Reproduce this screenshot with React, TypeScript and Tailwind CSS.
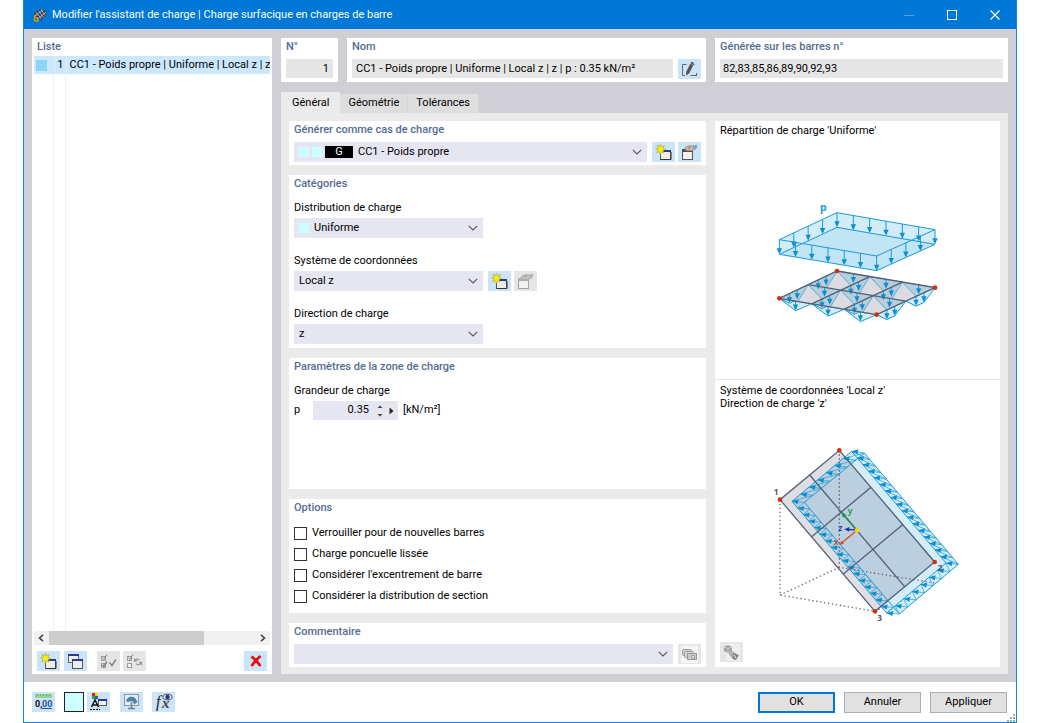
import React, { useState } from "react";

type Pt = [number, number];

const lerp = (a: Pt, b: Pt, t: number): Pt => [a[0] + (b[0] - a[0]) * t, a[1] + (b[1] - a[1]) * t];
const points = (...p: Pt[]) => p.map((q) => q.join(",")).join(" ");

/* ---------- Icons ---------- */

function Star() {
  return (
    <path
      d="M4.5 0 5.6 2.8 8.4 1.6 7 4.3 10 5.5 7 6.6 8 9.2 5.4 7.8 4.3 10.500 3.3 7.6 0.600 8.8 2.1 6 -0.500 4.7 2.3 3.8 1 1.2 3.6 2.6Z"
      fill="#f6ee12"
      stroke="#a2973a"
      strokeWidth="0.5"
    />
  );
}

function NewIcon() {
  return (
    <svg viewBox="-1 0 17 17" className="size-[17px]" aria-hidden="true">
      <rect x="4.500" y="6.500" width="10" height="9" fill="#ededea" stroke="#555" />
      <rect x="4" y="6" width="11" height="2" fill="#2a3a8c" />
      <path d="M5 15.500H15V8" fill="none" stroke="#333" />
      <Star />
    </svg>
  );
}

function EditIcon({ gray = false }: { gray?: boolean }) {
  return (
    <svg viewBox="0 0 17 17" className="size-[17px]" aria-hidden="true">
      <rect x="1.500" y="5.500" width="10" height="10" fill="#f1f1ef" stroke={gray ? "#a0a0a0" : "#555"} />
      <rect x="1" y="5" width="11" height="3" fill={gray ? "#b0b0b0" : "#4a5266"} />
      <path d="M4 4C6 2 8 1.600 11 1.800L13 4 11.500 6.500C10.500 7.500 9 6 8 6.800 6.500 7.500 4.500 6.500 4 4Z" fill={gray ? "#c6c6c6" : "#dcb797"} stroke={gray ? "#999" : "#94745c"} strokeWidth="0.700" />
      <path d="M6.500 5 9 4.500M7 3.500 10 3.500" stroke={gray ? "#999" : "#94745c"} strokeWidth="0.600" />
      <path d="M11 1.500 16.500 0.800 16 3.500 14 6.500 12.600 5Z" fill={gray ? "#b5b5b5" : "#7ba3d0"} />
    </svg>
  );
}

function CopyWindowsIcon() {
  return (
    <svg viewBox="0 0 17 17" className="size-[17px]" aria-hidden="true">
      <rect x="1.500" y="1.500" width="10" height="8" fill="#eee" stroke="#666" />
      <rect x="1" y="1" width="11" height="2" fill="#2a3a8c" />
      <rect x="5.500" y="6.500" width="10" height="9" fill="#ededea" stroke="#555" />
      <rect x="5" y="6" width="11" height="2" fill="#2a3a8c" />
    </svg>
  );
}

function CheckAllIcon({ swap = false }: { swap?: boolean }) {
  return (
    <svg viewBox="0 0 17 17" className="size-[17px]" fill="none" stroke="#9a9a9a" aria-hidden="true">
      <rect x="1.500" y="3.500" width="4" height="4" fill="#f2f2f2" />
      <rect x="1.500" y="10.500" width="4" height="4" fill="#f2f2f2" />
      <path d="M2.500 4.500 3.800 6.500 7 1.500" stroke="#808080" />
      {swap ? (
        <path d="M8.500 8C9.500 5.800 12 5.800 13.500 7M15.500 9.500C14 12 11.500 12 10 10.800M8.500 5.500V8H11M15.500 12V9.500H13" strokeWidth="1.300" />
      ) : (
        <path d="M2.500 11.500 3.800 13.500 7 8.500M9.500 9.500 12 12.500 16 6.500" stroke="#808080" strokeWidth="1.400" />
      )}
    </svg>
  );
}

function DeleteIcon() {
  return (
    <svg viewBox="0 0 14 14" className="size-3.5" aria-hidden="true">
      <path d="M2.500 2.500C5 4.500 9 8.500 11.500 12M11.500 2C8 5 5 8.500 2.500 12" stroke="#f00a0a" strokeWidth="2.800" fill="none" />
    </svg>
  );
}

function PencilIcon() {
  return (
    <svg viewBox="0 0 17 17" className="size-[17px]" fill="none" stroke="#666" aria-hidden="true">
      <path d="M5.500 3.500H1.500V14.500H4M12 3.500H13.500M9.500 14.500H16M15.500 12V14.500" />
      <path d="M9.500 3 12 4 8 12 5.500 14 5.500 11Z" fill="#555" stroke="#444" strokeWidth="0.600" />
      <path d="M10 1.500 12.500 2.500" stroke="#444" strokeWidth="1.500" />
    </svg>
  );
}

function StackIcon() {
  return (
    <svg viewBox="0 0 17 17" className="size-[17px]" stroke="#999" aria-hidden="true">
      <rect width="17" height="17" fill="#f5f5f5" stroke="none" />
      <rect x="1.500" y="3.500" width="9" height="6" rx="1" fill="#d6d6d6" />
      <rect x="3.500" y="5.500" width="9" height="6" rx="1" fill="#d6d6d6" />
      <rect x="6.500" y="7.500" width="9" height="6" fill="#c9c9c9" />
      <path d="M11 9.500H13.500V12H11Z" fill="#fff" />
    </svg>
  );
}

function TransferIcon() {
  return (
    <svg viewBox="0 0 17 17" className="size-[17px]" aria-hidden="true">
      <rect x="3" width="14" height="17" fill="#efefef" />
      <path d="M1 3 5 1 9 3V7L5 9 1 7Z" fill="#a3a3a3" />
      <path d="M1 3 5 4.500 9 3M5 4.500V9" stroke="#ccc" fill="none" />
      <path d="M5 9 9 7 14 10V13L10 15 7 12Z" fill="#b4b4b4" />
      <path d="M10 9 16 11 13 16 9.500 15Z" fill="#858585" />
      <path d="M11 11 13 14" stroke="#eee" />
    </svg>
  );
}

function UnitsIcon() {
  return (
    <svg viewBox="0 0 19 18" className="h-[18px] w-[19px]" aria-hidden="true">
      <rect x="1" y="1" width="17" height="4" fill="#8fd694" />
      <path d="M3.500 1V3M6.500 1V3M9.500 1V3M12.500 1V3M15.500 1V3" stroke="#579c5c" strokeWidth="0.700" />
      <text x="1" y="14" fontSize="9" fontWeight="700" fill="#111" fontFamily="Roboto, sans-serif">0,</text>
      <text x="8" y="14" fontSize="9" fontWeight="700" fill="#2454a4" fontFamily="Roboto, sans-serif">00</text>
      <path d="M8 15.500H18" stroke="#2454a4" />
    </svg>
  );
}

function DisplayIcon() {
  return (
    <svg viewBox="0 0 19 18" className="h-[18px] w-[19px]" aria-hidden="true">
      <rect x="3" y="0" width="3" height="3" fill="#e02020" />
      <rect x="6" y="0" width="3" height="3" fill="#e6d81e" />
      <rect x="3" y="3" width="3" height="3" fill="#22ad35" />
      <rect x="6" y="3" width="3" height="3" fill="#2c55d2" />
      <path d="M2.500 14 6 7 9.500 14M4 12H8" stroke="#111" strokeWidth="1.500" fill="none" />
      <path d="M1 16.500H11" stroke="#111" strokeDasharray="2 1" />
      <rect x="9.500" y="6.500" width="8" height="6" fill="#f3f3f3" stroke="#555" />
      <rect x="9" y="6" width="9" height="2" fill="#2a3a8c" />
    </svg>
  );
}

function ScreenIcon() {
  return (
    <svg viewBox="0 0 19 18" className="h-[18px] w-[19px]" aria-hidden="true">
      <rect x="2.500" y="1.500" width="14" height="11" fill="#e2edf5" stroke="#8a98a4" />
      <path d="M4 8C5 4 10 2.500 13 5L15.500 9 12 11.500 11 8.500C9 8 7 8 6 9Z" fill="#4a7fae" />
      <path d="M9.500 9V15M6 15.500H13" stroke="#75818b" strokeWidth="1.500" />
    </svg>
  );
}

function FormulaIcon() {
  return (
    <svg viewBox="0 0 19 18" className="h-[18px] w-[19px]" aria-hidden="true">
      <text x="2" y="14" fontSize="16" fontStyle="italic" fontFamily="Liberation Serif, serif" fill="#222">f</text>
      <text x="8" y="15" fontSize="15" fontStyle="italic" fontWeight="700" fontFamily="Liberation Serif, serif" fill="#444">x</text>
      <ellipse cx="13.500" cy="4" rx="4.500" ry="2.800" fill="#e8ecfa" stroke="#27356e" strokeWidth="0.900" />
      <circle cx="13.500" cy="4" r="2.200" fill="#27356e" />
    </svg>
  );
}

function AppIcon() {
  return (
    <svg viewBox="0 0 16 16" className="size-4" aria-hidden="true">
      <path d="M2 6 8 2 14.500 4 14.500 8 9 13.500 5 12Z" fill="#2f3d57" />
      <path d="M4 5 9.500 12M6.500 3.500 11.500 10.500M9 2.500 13.500 8.500M3 9 11 2.800M6 12 14 5" stroke="#b6c4d6" strokeWidth="0.900" />
      <text x="1" y="14.500" fontSize="10" fontWeight="700" fill="#f3c22b" stroke="#5a4a14" strokeWidth="0.300" fontFamily="Roboto, sans-serif">6</text>
    </svg>
  );
}

function Chevron() {
  return (
    <svg viewBox="0 0 10 6" className="pointer-events-none h-1.5 w-2.5 shrink-0" fill="none" aria-hidden="true">
      <path d="M0.800 0.800 5 5 9.200 0.800" stroke="#555" strokeWidth="1.100" />
    </svg>
  );
}

/* ---------- Building blocks ---------- */

function Panel({ title, className = "", children }: { title: string; className?: string; children: React.ReactNode }) {
  return (
    <section className={`flex flex-col bg-white px-[5px] pt-px pb-[3px] ${className}`}>
      <h2 className="leading-4 font-medium text-[#566b93]">{title}</h2>
      {children}
    </section>
  );
}

function IconButton({ label, disabled = false, children }: { label: string; disabled?: boolean; children: React.ReactNode }) {
  return (
    <button
      type="button"
      aria-label={label}
      disabled={disabled}
      className="flex h-5 w-[23px] shrink-0 items-center justify-center bg-[#cce4f7] disabled:bg-[#e6e6e6]"
    >
      {children}
    </button>
  );
}

function Combo({ id, label, value, lead, className = "" }: { id: string; label?: string; value: string; lead?: React.ReactNode; className?: string }) {
  return (
    <div className={`flex h-5 items-center gap-[5px] bg-[#e6e6f2] px-[5px] ${className}`}>
      {lead}
      <select id={id} aria-label={label} defaultValue={value} className="-mr-3.5 h-5 min-w-0 flex-1 appearance-none bg-transparent outline-none">
        <option>{value}</option>
      </select>
      <Chevron />
    </div>
  );
}

const Swatch = () => <span className="block size-2.5 shrink-0 bg-[#ccffff]" />;

/* ---------- Diagrams ---------- */

const BLUE = "#1a9ad6";

function DownArrow({ at, len }: { at: Pt; len: number }) {
  const [x, y] = at;
  return (
    <g>
      <path d={`M${x} ${y}V${y + len - 8}`} stroke={BLUE} strokeWidth="3" />
      <path d={`M${x - 8} ${y + len - 18}H${x + 8}L${x} ${y + len}Z`} fill="#0c8fd0" />
    </g>
  );
}

function UniformLoadDiagram() {
  const top: Pt[] = [[216, 71], [510, 122], [335, 201], [43, 152]];
  const low = top.map(([x, y]): Pt => [x, y + 44]);
  const base: Pt[] = [[216, 246], [510, 296], [335, 377], [43, 328]];
  const node = (u: number, v: number): Pt => lerp(lerp(base[0], base[1], u / 3), lerp(base[3], base[2], u / 3), v / 2);
  const arrows: Pt[] = [];
  for (let i = 0; i <= 6; i++) arrows.push(lerp(top[0], top[1], i / 6), lerp(top[3], top[2], i / 6));
  for (let i = 1; i < 4; i++) arrows.push(lerp(top[0], top[3], i / 4), lerp(top[1], top[2], i / 4));
  const drop = (p: Pt, d: number): Pt => [p[0], p[1] + d];
  const hangs: Pt[][] = [];
  const loads: Pt[] = [];
  for (let v = 0; v <= 2; v++)
    for (let u = 0; u < 3; u++) {
      const a = node(u, v);
      const b = node(u + 1, v);
      const m = lerp(a, b, 0.5);
      hangs.push([a, b, drop(m, 29)]);
      loads.push(m);
    }
  for (let u = 0; u <= 3; u++)
    for (let v = 0; v < 2; v++) {
      const a = node(u, v);
      const b = node(u, v + 1);
      const p = lerp(a, b, 0.38);
      const q = lerp(a, b, 0.65);
      hangs.push([a, b, drop(q, 29), drop(p, 29)]);
      loads.push(p, q);
    }
  const free: Pt[][] = [];
  for (let v = 0; v < 2; v++)
    for (let u = 0; u < 3; u++)
      free.push([
        lerp(node(u, v + 1), node(u + 1, v + 1), 0.57),
        node(u, v),
        lerp(node(u + 1, v + 1), node(u + 1, v), 0.35),
        node(u + 1, v + 1),
      ]);
  return (
    <svg viewBox="0 0 555 420" className="h-[140px] w-[185px]" role="img" aria-label="Répartition de charge uniforme">
      <text x="165" y="66" fontSize="31" fontWeight="700" fill={BLUE} fontFamily="Open Sans, sans-serif">p</text>
      <polygon points={points(top[0], top[1], low[1], low[2], low[3], top[3])} fill="#d3edf8" />
      <polygon points={points(...low)} fill="#c2e5f5" />
      <g fill="none" stroke={BLUE} strokeWidth="3">
        <polygon points={points(...top)} />
        <polygon points={points(...low)} />
      </g>
      {arrows.map((a, i) => <DownArrow key={i} at={a} len={44} />)}
      {hangs.map((h, i) => (
        <polygon key={i} points={points(...h)} fill="#d3edf8" stroke={BLUE} strokeWidth="3" />
      ))}
      <polygon points={points(...base)} fill="#b9cedb" />
      {free.map((f, i) => (
        <g key={i}>
          <polygon points={points(...f)} fill="#dddbe2" />
          <polyline points={points(f[0], f[1], f[2])} fill="none" stroke={BLUE} strokeWidth="2" />
        </g>
      ))}
      {loads.map((a, i) => <DownArrow key={i} at={a} len={28} />)}
      <g fill="none" stroke="#52617a" strokeWidth="4">
        <polygon points={points(...base)} />
        <polyline points={points(node(0, 1), node(3, 1))} />
        <polyline points={points(node(1, 0), node(1, 2))} />
        <polyline points={points(node(2, 0), node(2, 2))} />
      </g>
      {base.map(([x, y], i) => <circle key={i} cx={x} cy={y} r="7" fill="#cc3311" />)}
    </svg>
  );
}

function LocalAxisDiagram() {
  const plate: Pt[] = [[238, 34], [524, 369], [345, 517], [60, 182]];
  const near: Pt[] = [[275, 37], [558, 372], [380, 522], [96, 187]];
  const far: Pt[] = [[313, 42], [595, 376], [418, 525], [133, 190]];
  const arrows: [Pt, Pt, Pt][] = [];
  const edge = (i: number, j: number, n: number) => {
    for (let k = 0; k < n; k++)
      arrows.push([lerp(far[i], far[j], k / n), lerp(near[i], near[j], k / n), lerp(far[i], far[j], (k + 1) / n)]);
  };
  edge(0, 1, 17);
  edge(1, 2, 7);
  edge(2, 3, 17);
  edge(3, 0, 7);
  return (
    <svg viewBox="0 0 660 570" className="h-[190px] w-[220px]" role="img" aria-label="Système de coordonnées local z">
      <path d="M60 182V468L345 517M60 468 238 385M524 432V369M345 517 524 432" fill="none" stroke="#666676" strokeWidth="4" strokeDasharray="4 8" />
      <polygon points={points(near[0], far[0], far[1], far[2], near[2], near[3])} fill="#d5edf9" />
      <polygon points={points(...plate)} fill="#5c5c74" fillOpacity="0.2" />
      <path d="M238 34V385L524 432" fill="none" stroke="#666676" strokeWidth="4" strokeDasharray="4 8" />
      <g fill="none" stroke={BLUE} strokeWidth="2">
        <polygon points={points(...near)} strokeWidth="3" />
        <polygon points={points(...far)} strokeWidth="3" />
        {arrows.map((a, i) => <polyline key={i} points={points(...a)} />)}
      </g>
      {arrows.map(([, [x, y]], i) => (
        <polygon key={i} points={points([x, y], [x + 20, y - 6], [x + 17, y + 9])} fill="#0c8fd0" />
      ))}
      <g fill="none" stroke="#52617a" strokeWidth="4">
        <polygon points={points(...plate)} />
        <path d="M149 108 434 443M333 145 155 293M428 257 250 405" />
      </g>
      <path d="M291 274 248 223" stroke="#169447" strokeWidth="4" />
      <path d="M243 218 259 228 249 236Z" fill="#169447" />
      <path d="M291 274 242 314" stroke="#dc4c22" strokeWidth="4" />
      <path d="M238 318 244 305 252 314Z" fill="#dc4c22" />
      <path d="M291 273 262 271" stroke="#1a33b8" strokeWidth="4" />
      <path d="M253 271 268 264V278Z" fill="#1a33b8" />
      <circle cx="291" cy="274" r="7" fill="#f5d90a" />
      {plate.map(([x, y], i) => <circle key={i} cx={x} cy={y} r="7" fill="#cc3311" />)}
      <g fontFamily="Open Sans, sans-serif" fontSize="26" fontWeight="600">
        <text x="263" y="224" fill="#169447">y</text>
        <text x="235" y="277" fill="#1a33b8">z</text>
        <text x="221" y="318" fill="#c04a2c">x</text>
        <g fill="#555566" fontWeight="700" fontSize="25">
          <text x="41" y="167">1</text>
          <text x="533" y="396">2</text>
          <text x="352" y="547">3</text>
        </g>
      </g>
    </svg>
  );
}

/* ---------- Page ---------- */

const TABS = ["Général", "Géométrie", "Tolérances"];
const OPTIONS = [
  "Verrouiller pour de nouvelles barres",
  "Charge poncuelle lissée",
  "Considérer l'excentrement de barre",
  "Considérer la distribution de section",
];

export default function App() {
  const [tab, setTab] = useState(0);
  return (
    <div className="flex min-h-screen bg-white px-[23px] font-['Roboto','Open_Sans',sans-serif] text-[11px] text-black">
      <div className="flex min-w-0 flex-1 flex-col border border-t-0 border-[#1a82d8]">
        <header className="flex h-[29px] items-center bg-[#0078d7] pl-2 text-white">
          <AppIcon />
          <h1 className="ml-1 flex-1 truncate pt-px leading-4">Modifier l'assistant de charge | Charge surfacique en charges de barre</h1>
          <button type="button" aria-label="Réduire" className="flex h-full w-[43px] items-center justify-center opacity-30">
            <svg viewBox="0 0 10 10" className="size-2.5" aria-hidden="true"><path d="M0 5.500H10" stroke="#fff" /></svg>
          </button>
          <button type="button" aria-label="Agrandir" className="flex h-full w-[43px] items-center justify-center">
            <svg viewBox="0 0 10 10" className="size-2.5" aria-hidden="true"><rect x="0.500" y="0.500" width="9" height="9" fill="none" stroke="#fff" /></svg>
          </button>
          <button type="button" aria-label="Fermer" className="flex h-full w-[43px] items-center justify-center">
            <svg viewBox="0 0 10 10" className="size-2.5" aria-hidden="true"><path d="M0.500 0.500 9.500 9.500M9.500 0.500 0.500 9.500" stroke="#fff" strokeWidth="1.200" /></svg>
          </button>
        </header>

        <main className="flex flex-1 gap-[9px] border-t border-[#dcd3d3] bg-[#d0cfd5] p-2">
          <section className="flex w-60 shrink-0 flex-col bg-white px-0.5 pt-px pb-[3px]">
            <h2 className="px-[3px] leading-4 font-medium text-[#566b93]">Liste</h2>
            <table className="mt-px w-full table-fixed border-collapse">
              <tbody>
                <tr className="h-[18px] bg-[#cce8ff]">
                  <td className="w-5 border-r border-[#e4eef5] p-0 pl-0.5"><span className="block size-[11px] bg-[#8bd6f5]" /></td>
                  <td className="w-3 border-r border-[#e4eef5] p-0 pr-0.5 text-right leading-[18px]">1</td>
                  <td className="overflow-hidden p-0 pl-[3px] leading-[18px] whitespace-nowrap">CC1 - Poids propre | Uniforme | Local z | z</td>
                </tr>
              </tbody>
            </table>
            <div className="grid flex-1 grid-cols-[20px_12px_1fr]">
              <span className="border-r border-[#f0f0f0]" />
              <span className="border-r border-[#f0f0f0]" />
            </div>
            <div className="flex h-3.5 items-center bg-[#f0f0f0] px-[3px]">
              <svg viewBox="0 0 8 8" className="size-2" fill="none" aria-hidden="true"><path d="M6 0.800 2.500 4 6 7.200" stroke="#444" strokeWidth="1.600" /></svg>
              <div className="mx-1 flex h-full flex-1"><div className="w-3/4 bg-[#cdcdcd]" /></div>
              <svg viewBox="0 0 8 8" className="size-2" fill="none" aria-hidden="true"><path d="M2 0.800 5.500 4 2 7.200" stroke="#444" strokeWidth="1.600" /></svg>
            </div>
            <div className="mt-1.5 flex gap-1 px-[3px]">
              <IconButton label="Nouveau"><NewIcon /></IconButton>
              <IconButton label="Copier"><CopyWindowsIcon /></IconButton>
              <div className="ml-1.5 flex gap-[3px]">
                <IconButton label="Tout sélectionner" disabled><CheckAllIcon /></IconButton>
                <IconButton label="Inverser la sélection" disabled><CheckAllIcon swap /></IconButton>
              </div>
              <div className="ml-auto"><IconButton label="Supprimer"><DeleteIcon /></IconButton></div>
            </div>
          </section>

          <div className="flex min-w-0 flex-1 flex-col">
            <div className="flex gap-[9px]">
              <Panel title="N°" className="w-[57px] shrink-0">
                <input aria-label="N°" readOnly value="1" className="mt-1 h-[19px] w-full bg-[#e6e6e6] px-1 text-right" />
              </Panel>
              <Panel title="Nom" className="min-w-0 flex-1">
                <div className="mt-1 flex gap-[5px]">
                  <input aria-label="Nom" readOnly value="CC1 - Poids propre | Uniforme | Local z | z | p : 0.35 kN/m²" className="h-[19px] min-w-0 flex-1 bg-[#e6e6e6] px-1" />
                  <IconButton label="Modifier le nom"><PencilIcon /></IconButton>
                </div>
              </Panel>
              <Panel title="Générée sur les barres n°" className="w-[293px] shrink-0">
                <input aria-label="Générée sur les barres n°" readOnly value="82,83,85,86,89,90,92,93" className="mt-1 h-[19px] w-full bg-[#e6e6e6] px-[3px]" />
              </Panel>
            </div>

            <div role="tablist" className="mt-2.5 flex h-[21px] items-end">
              {TABS.map((t, i) => (
                <button
                  key={t}
                  type="button"
                  role="tab"
                  aria-selected={tab === i}
                  onClick={() => setTab(i)}
                  className={tab === i ? "h-[21px] bg-[#ebebeb] px-[11px] pt-0.5" : "h-[19px] border-r border-[#d4d4d6] bg-[#dedede] px-2"}
                >
                  {t}
                </button>
              ))}
            </div>

            <div className="flex flex-1 gap-[9px] bg-[#ebebeb] px-2 pt-2 pb-[7px]">
              <div className="flex min-w-0 flex-1 flex-col gap-2.5">
                <Panel title="Générer comme cas de charge">
                  <div className="mt-1 flex gap-[3px]">
                    <Combo
                      id="case"
                      label="Générer comme cas de charge"
                      value="CC1 - Poids propre"
                      className="mr-0.5 min-w-0 flex-1"
                      lead={
                        <span className="flex items-center gap-[3px]">
                          <Swatch />
                          <Swatch />
                          <span className="flex h-3 w-7 items-center justify-center bg-black text-white">G</span>
                        </span>
                      }
                    />
                    <IconButton label="Nouveau cas de charge"><NewIcon /></IconButton>
                    <IconButton label="Modifier le cas de charge"><EditIcon /></IconButton>
                  </div>
                </Panel>

                <Panel title="Catégories">
                  <label htmlFor="dist" className="mt-2 mb-0.5 leading-4">Distribution de charge</label>
                  <Combo id="dist" value="Uniforme" className="w-[189px]" lead={<Swatch />} />
                  <label htmlFor="coord" className="mt-[15px] mb-0.5 leading-4">Système de coordonnées</label>
                  <div className="flex gap-[3px]">
                    <Combo id="coord" value="Local z" className="mr-0.5 w-[189px]" />
                    <IconButton label="Nouveau système"><NewIcon /></IconButton>
                    <IconButton label="Modifier le système" disabled><EditIcon gray /></IconButton>
                  </div>
                  <label htmlFor="dir" className="mt-[15px] mb-0.5 leading-4">Direction de charge</label>
                  <Combo id="dir" value="z" className="mb-px w-[189px]" />
                </Panel>

                <Panel title="Paramètres de la zone de charge" className="flex-1">
                  <p className="mt-2 mb-0.5 leading-4">Grandeur de charge</p>
                  <div className="flex items-center">
                    <label htmlFor="p" className="w-[19px]">p</label>
                    <div className="flex h-[19px] w-[85px] items-center bg-[#e6e6f2] pr-1">
                      <input id="p" defaultValue="0.35" className="min-w-0 flex-1 bg-transparent text-right outline-none" />
                      <svg viewBox="0 0 6 12" className="ml-2 h-3 w-1.5" fill="#444" aria-hidden="true"><path d="M3 0.500 5.500 3H0.500ZM3 11.500 5.500 9H0.500Z" /></svg>
                      <svg viewBox="0 0 5 8" className="ml-1.5 h-2 w-[5px]" fill="#222" aria-hidden="true"><path d="M0.500 0.500 4.500 4 0.500 7.500Z" /></svg>
                    </div>
                    <span className="ml-[5px]">[kN/m²]</span>
                  </div>
                </Panel>

                <Panel title="Options">
                  <div className="mt-[7px] mb-[3px]">
                    {OPTIONS.map((o) => (
                      <label key={o} className="flex h-[21px] items-center gap-[5px]">
                        <input type="checkbox" className="size-[13px] appearance-none border border-[#333] bg-white checked:bg-[#0078d7]" />
                        {o}
                      </label>
                    ))}
                  </div>
                </Panel>

                <Panel title="Commentaire">
                  <div className="mt-1 flex gap-[5px]">
                    <Combo id="comment" label="Commentaire" value="" className="min-w-0 flex-1" />
                    <IconButton label="Commentaires enregistrés" disabled><StackIcon /></IconButton>
                  </div>
                </Panel>
              </div>

              <div className="grid w-[285px] shrink-0 grid-rows-[259fr_288fr] bg-white">
                <section className="flex flex-col border-b border-[#e4e4e4] px-[5px] pt-0.5">
                  <p className="leading-4">Répartition de charge 'Uniforme'</p>
                  <div className="flex flex-1 items-center justify-center"><UniformLoadDiagram /></div>
                </section>
                <section className="flex flex-col px-[5px] pt-1 pb-[5px]">
                  <p className="leading-[13px]">Système de coordonnées 'Local z'</p>
                  <p className="leading-[13px]">Direction de charge 'z'</p>
                  <div className="flex flex-1 items-center justify-center pt-4 pl-6"><LocalAxisDiagram /></div>
                  <IconButton label="Transférer" disabled><TransferIcon /></IconButton>
                </section>
              </div>
            </div>
          </div>
        </main>

        <footer className="flex h-10 items-center bg-white pr-[9px] pl-2">
          <IconButton label="Unités"><UnitsIcon /></IconButton>
          <div className="ml-[9px] flex items-center gap-[3px]">
            <button type="button" aria-label="Couleur" className="size-5 border border-[#222] bg-[#ccffff]" />
            <IconButton label="Affichage"><DisplayIcon /></IconButton>
          </div>
          <div className="ml-2.5 flex gap-[9px]">
            <IconButton label="Vue"><ScreenIcon /></IconButton>
            <IconButton label="Formule"><FormulaIcon /></IconButton>
          </div>
          <div className="ml-auto flex gap-[9px]">
            <button type="button" className="h-[21px] w-[77px] border-2 border-[#0078d7] bg-[#e1e1e1] leading-4">OK</button>
            <button type="button" className="h-[21px] w-[77px] border border-[#adadad] bg-[#e1e1e1] leading-4">Annuler</button>
            <button type="button" className="h-[21px] w-[77px] border border-[#adadad] bg-[#e1e1e1] leading-4">Appliquer</button>
          </div>
          <svg viewBox="0 0 8 8" className="-mr-2 size-2 self-end" fill="#aaa" aria-hidden="true">
            <path d="M6 0H8V2H6ZM3 3H5V5H3ZM6 3H8V5H6ZM0 6H2V8H0ZM3 6H5V8H3ZM6 6H8V8H6Z" />
          </svg>
        </footer>
      </div>
    </div>
  );
}
